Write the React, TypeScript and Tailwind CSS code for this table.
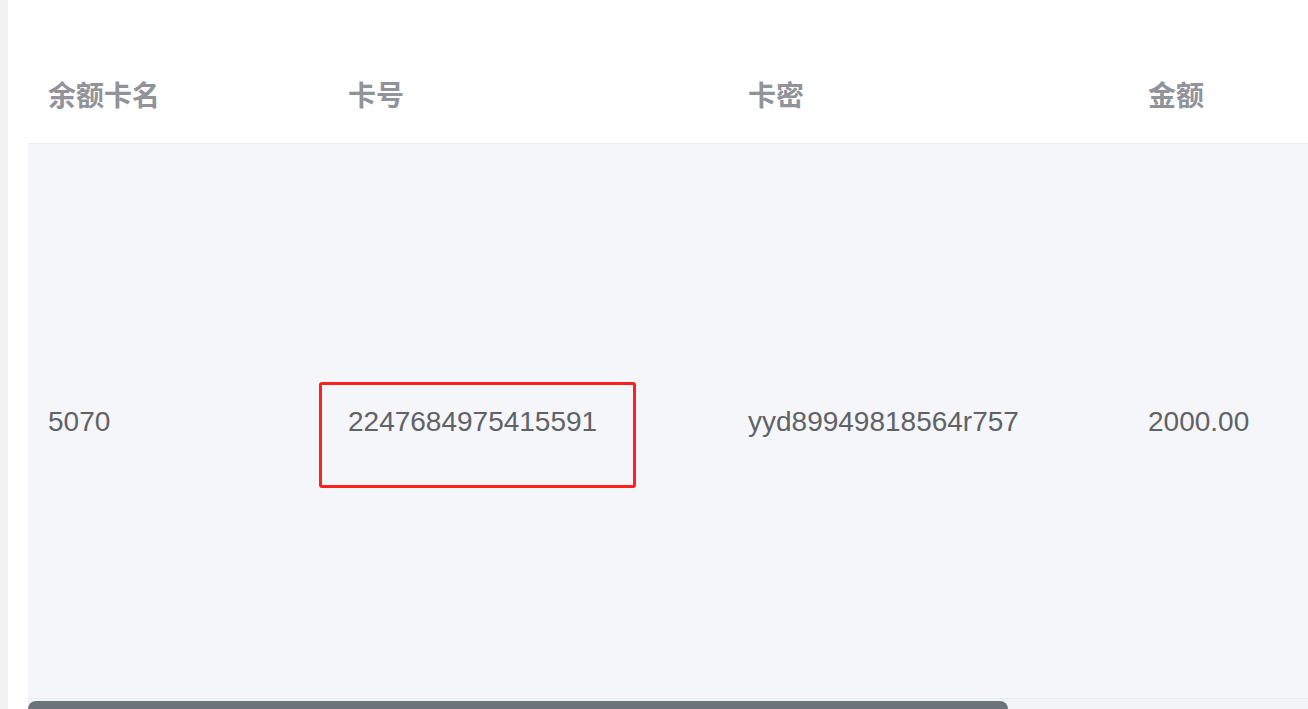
export default function App() {
  const font = "font-['Liberation_Sans','Noto_Sans_CJK_SC',sans-serif]";

  return (
    <div className={`flex h-[709px] w-[1308px] overflow-hidden bg-white ${font}`}>
      {/* left gutter */}
      <div className="w-2 shrink-0 bg-[#f2f2f2]" />

      <div className="flex-1 pl-5 pt-[50px]">
        {/* header */}
        <div className="grid h-[94px] grid-cols-[300px_400px_400px_1fr] items-center border-b border-[#ebeef5] text-[28px] font-bold text-[#909399]">
          <div className="pl-5">余额卡名</div>
          <div className="pl-5">卡号</div>
          <div className="pl-5">卡密</div>
          <div className="pl-5">金额</div>
        </div>

        {/* body row */}
        <div className="relative grid h-[555px] grid-cols-[300px_400px_400px_1fr] items-center border-b border-[#e8ebf0] bg-[#f5f6fa] pt-[1px] text-[28px] text-[#606266]">
          <div className="pl-5">5070</div>
          <div className="pl-5">2247684975415591</div>
          <div className="pl-5">yyd89949818564r757</div>
          <div className="pl-5">2000.00</div>

          {/* highlight annotation */}
          <div className="absolute left-[291px] top-[238px] h-[106px] w-[317px] rounded-[3px] border-[3px] border-[#ff2020]" />
        </div>

        {/* horizontal scrollbar */}
        <div className="h-[10px] bg-[#f3f4f6] pt-[2px]">
          <div className="h-[8px] w-[980px] rounded-t-[9px] bg-[#6b737b]" />
        </div>
      </div>
    </div>
  );
}
